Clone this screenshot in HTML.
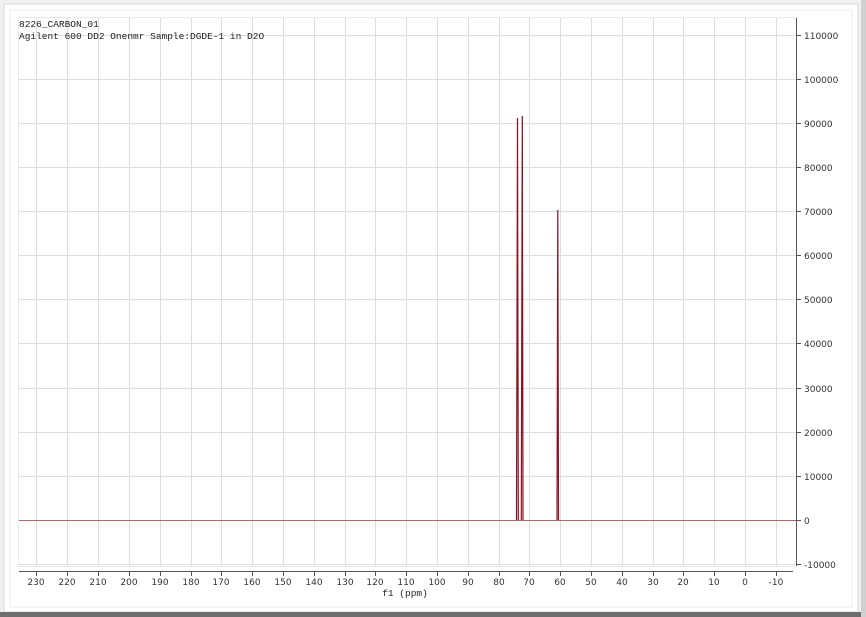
<!DOCTYPE html>
<html><head><meta charset="utf-8"><style>
html,body{margin:0;padding:0;background:#fff;}
svg{display:block;}
text{font-family:"DejaVu Sans","Liberation Sans",sans-serif;font-size:9px;fill:#333;}
.m{font-family:"Liberation Mono",monospace;font-size:9.5px;fill:#222;}
</style></head><body>
<svg width="866" height="617" viewBox="0 0 866 617">
<rect x="0" y="0" width="866" height="617" fill="#f0f0f0"/>
<rect x="4" y="4" width="854" height="608" fill="#fff" stroke="#d8d8d8"/>
<rect x="10" y="10" width="842" height="597" fill="#fff" stroke="#ececec"/>
<rect x="0" y="612" width="866" height="5" fill="#6e6e6e"/>
<rect x="861" y="0" width="5" height="617" fill="#d0d0d0"/>
<g stroke="#dedede" stroke-width="1">
<line x1="36.5" y1="18" x2="36.5" y2="566"/><line x1="67.5" y1="18" x2="67.5" y2="566"/><line x1="98.5" y1="18" x2="98.5" y2="566"/><line x1="129.5" y1="18" x2="129.5" y2="566"/><line x1="160.5" y1="18" x2="160.5" y2="566"/><line x1="191.5" y1="18" x2="191.5" y2="566"/><line x1="221.5" y1="18" x2="221.5" y2="566"/><line x1="252.5" y1="18" x2="252.5" y2="566"/><line x1="283.5" y1="18" x2="283.5" y2="566"/><line x1="314.5" y1="18" x2="314.5" y2="566"/><line x1="345.5" y1="18" x2="345.5" y2="566"/><line x1="375.5" y1="18" x2="375.5" y2="566"/><line x1="406.5" y1="18" x2="406.5" y2="566"/><line x1="437.5" y1="18" x2="437.5" y2="566"/><line x1="468.5" y1="18" x2="468.5" y2="566"/><line x1="499.5" y1="18" x2="499.5" y2="566"/><line x1="529.5" y1="18" x2="529.5" y2="566"/><line x1="560.5" y1="18" x2="560.5" y2="566"/><line x1="591.5" y1="18" x2="591.5" y2="566"/><line x1="622.5" y1="18" x2="622.5" y2="566"/><line x1="653.5" y1="18" x2="653.5" y2="566"/><line x1="683.5" y1="18" x2="683.5" y2="566"/><line x1="714.5" y1="18" x2="714.5" y2="566"/><line x1="745.5" y1="18" x2="745.5" y2="566"/><line x1="776.5" y1="18" x2="776.5" y2="566"/>
<line x1="19" y1="35.5" x2="796" y2="35.5"/><line x1="19" y1="79.5" x2="796" y2="79.5"/><line x1="19" y1="123.5" x2="796" y2="123.5"/><line x1="19" y1="167.5" x2="796" y2="167.5"/><line x1="19" y1="211.5" x2="796" y2="211.5"/><line x1="19" y1="255.5" x2="796" y2="255.5"/><line x1="19" y1="299.5" x2="796" y2="299.5"/><line x1="19" y1="343.5" x2="796" y2="343.5"/><line x1="19" y1="388.5" x2="796" y2="388.5"/><line x1="19" y1="432.5" x2="796" y2="432.5"/><line x1="19" y1="476.5" x2="796" y2="476.5"/><line x1="19" y1="564.5" x2="796" y2="564.5"/>
</g>
<rect x="18.5" y="17.5" width="778" height="549" fill="none" stroke="#e8e8e8"/>
<line x1="19" y1="520.5" x2="796" y2="520.5" stroke="#a07070" stroke-width="1"/>
<g stroke="#8b1020" stroke-width="1.2" fill="none">
<path d="M516.5 520 L517.5 118 L518.3 520"/>
<path d="M521.3 520 L522.3 116 L523 520"/>
<path d="M557 520 L557.8 210 L558.5 520"/>
</g>
<line x1="796.5" y1="18" x2="796.5" y2="566" stroke="#555"/>
<g stroke="#555">
<line x1="797" y1="35.5" x2="801" y2="35.5"/><line x1="797" y1="79.5" x2="801" y2="79.5"/><line x1="797" y1="123.5" x2="801" y2="123.5"/><line x1="797" y1="167.5" x2="801" y2="167.5"/><line x1="797" y1="211.5" x2="801" y2="211.5"/><line x1="797" y1="255.5" x2="801" y2="255.5"/><line x1="797" y1="299.5" x2="801" y2="299.5"/><line x1="797" y1="343.5" x2="801" y2="343.5"/><line x1="797" y1="388.5" x2="801" y2="388.5"/><line x1="797" y1="432.5" x2="801" y2="432.5"/><line x1="797" y1="476.5" x2="801" y2="476.5"/><line x1="797" y1="520.5" x2="801" y2="520.5"/><line x1="797" y1="564.5" x2="801" y2="564.5"/>
</g>
<g>
<text x="804" y="39">110000</text><text x="804" y="83">100000</text><text x="804" y="127">90000</text><text x="804" y="171">80000</text><text x="804" y="215">70000</text><text x="804" y="259">60000</text><text x="804" y="303">50000</text><text x="804" y="347">40000</text><text x="804" y="392">30000</text><text x="804" y="436">20000</text><text x="804" y="480">10000</text><text x="804" y="524">0</text><text x="804" y="568">-10000</text>
</g>
<line x1="19" y1="571.5" x2="793" y2="571.5" stroke="#555"/>
<g stroke="#555">
<line x1="36.5" y1="571" x2="36.5" y2="576"/><line x1="67.5" y1="571" x2="67.5" y2="576"/><line x1="98.5" y1="571" x2="98.5" y2="576"/><line x1="129.5" y1="571" x2="129.5" y2="576"/><line x1="160.5" y1="571" x2="160.5" y2="576"/><line x1="191.5" y1="571" x2="191.5" y2="576"/><line x1="221.5" y1="571" x2="221.5" y2="576"/><line x1="252.5" y1="571" x2="252.5" y2="576"/><line x1="283.5" y1="571" x2="283.5" y2="576"/><line x1="314.5" y1="571" x2="314.5" y2="576"/><line x1="345.5" y1="571" x2="345.5" y2="576"/><line x1="375.5" y1="571" x2="375.5" y2="576"/><line x1="406.5" y1="571" x2="406.5" y2="576"/><line x1="437.5" y1="571" x2="437.5" y2="576"/><line x1="468.5" y1="571" x2="468.5" y2="576"/><line x1="499.5" y1="571" x2="499.5" y2="576"/><line x1="529.5" y1="571" x2="529.5" y2="576"/><line x1="560.5" y1="571" x2="560.5" y2="576"/><line x1="591.5" y1="571" x2="591.5" y2="576"/><line x1="622.5" y1="571" x2="622.5" y2="576"/><line x1="653.5" y1="571" x2="653.5" y2="576"/><line x1="683.5" y1="571" x2="683.5" y2="576"/><line x1="714.5" y1="571" x2="714.5" y2="576"/><line x1="745.5" y1="571" x2="745.5" y2="576"/><line x1="776.5" y1="571" x2="776.5" y2="576"/>
</g>
<g text-anchor="middle">
<text x="36" y="585">230</text><text x="67" y="585">220</text><text x="98" y="585">210</text><text x="129" y="585">200</text><text x="160" y="585">190</text><text x="191" y="585">180</text><text x="221" y="585">170</text><text x="252" y="585">160</text><text x="283" y="585">150</text><text x="314" y="585">140</text><text x="345" y="585">130</text><text x="375" y="585">120</text><text x="406" y="585">110</text><text x="437" y="585">100</text><text x="468" y="585">90</text><text x="499" y="585">80</text><text x="529" y="585">70</text><text x="560" y="585">60</text><text x="591" y="585">50</text><text x="622" y="585">40</text><text x="653" y="585">30</text><text x="683" y="585">20</text><text x="714" y="585">10</text><text x="745" y="585">0</text><text x="776" y="585">-10</text>
<text x="405" y="596" class="m">f1 (ppm)</text>
</g>
<text x="19" y="27" class="m">8226_CARBON_01</text>
<text x="19" y="39" class="m">Agilent 600 DD2 Onenmr Sample:DGDE-1 in D2O</text>
</svg>
</body></html>
